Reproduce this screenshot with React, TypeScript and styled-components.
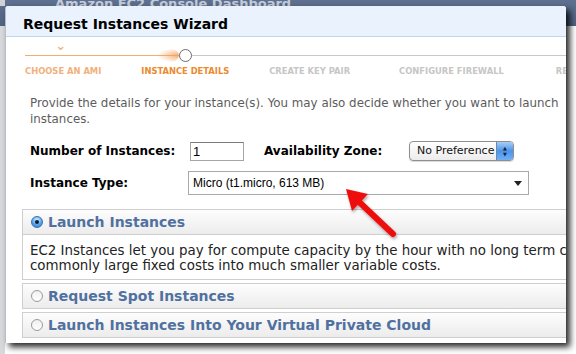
import { FC } from 'react';
import styled, { createGlobalStyle } from 'styled-components';

const GlobalStyle = createGlobalStyle`
  html, body {
    margin: 0;
    padding: 0;
    background: #ffffff;
  }
  body {
    font-family: 'DejaVu Sans', Verdana, sans-serif;
  }
`;

interface Step {
  label: string;
  state: 'done' | 'current' | 'todo';
  shift?: number;
}

const steps: Step[] = [
  { label: 'CHOOSE AN AMI', state: 'done' },
  { label: 'INSTANCE DETAILS', state: 'current' },
  { label: 'CREATE KEY PAIR', state: 'todo' },
  { label: 'CONFIGURE FIREWALL', state: 'todo', shift: 9 },
  { label: 'REVIEW', state: 'todo', shift: 12 },
];

interface Option {
  title: string;
  selected?: boolean;
  body?: string[];
}

const options: Option[] = [
  {
    title: 'Launch Instances',
    selected: true,
    body: [
      'EC2 Instances let you pay for compute capacity by the hour with no long term commitments.',
      'commonly large fixed costs into much smaller variable costs.',
    ],
  },
  { title: 'Request Spot Instances' },
  { title: 'Launch Instances Into Your Virtual Private Cloud' },
];

const Radio: FC<{ checked?: boolean }> = ({ checked }) => (
  <RadioMark checked={checked} />
);

const RedArrow: FC = () => (
  <ArrowSvg width="70" height="60" viewBox="0 0 70 60">
    <defs>
      <filter id="sh" x="-20%" y="-20%" width="140%" height="140%">
        <feDropShadow dx="1" dy="2" stdDeviation="1.5" floodColor="#000" floodOpacity="0.35" />
      </filter>
    </defs>
    <g filter="url(#sh)">
      <line x1="56" y1="52" x2="19" y2="17" stroke="#ee1111" strokeWidth="6" strokeLinecap="round" />
      <polygon points="9,7 31,12 15,29" fill="#ee1111" />
    </g>
  </ArrowSvg>
);

const App: FC = () => (
  <Desktop>
    <GlobalStyle />
    <BackTitleBar>
      <BackCorner />
      <BackTitle>Amazon EC2 Console Dashboard</BackTitle>
    </BackTitleBar>
    <BackPage />

    <Dialog>
      <Header>
        <Title>Request Instances Wizard</Title>
      </Header>

      <Steps>
        {steps.map((s) => (
          <StepItem key={s.label} shift={s.shift ?? 0}>
            <Marker>
              {s.state === 'done' && <Check>&#8964;</Check>}
              {s.state === 'current' && <CurrentDot />}
            </Marker>
            <StepLabel state={s.state}>{s.label}</StepLabel>
          </StepItem>
        ))}
      </Steps>

      <Content>
        <Intro>
          Provide the details for your instance(s). You may also decide whether you want to launch
          <br />
          instances.
        </Intro>

        <FormRow>
          <FieldLabel width={160}>Number of Instances:</FieldLabel>
          <NumberInput>1</NumberInput>
          <FieldLabel width={146}>Availability Zone:</FieldLabel>
          <MacSelect>
            <MacSelectText>No Preference</MacSelectText>
            <MacStepper>
              <span>&#9650;</span>
              <span>&#9660;</span>
            </MacStepper>
          </MacSelect>
        </FormRow>

        <FormRow>
          <FieldLabel width={159}>Instance Type:</FieldLabel>
          <TypeSelect>
            <span>Micro (t1.micro, 613 MB)</span>
            <DropTriangle />
          </TypeSelect>
        </FormRow>

        <Panels>
          {options.map((o) => (
            <Panel key={o.title}>
              <PanelHeader>
                <Radio checked={o.selected} />
                <PanelTitle>{o.title}</PanelTitle>
              </PanelHeader>
              {o.body && (
                <PanelBody>
                  {o.body.map((line) => (
                    <div key={line}>{line}</div>
                  ))}
                </PanelBody>
              )}
            </Panel>
          ))}
        </Panels>
      </Content>

      <RedArrow />
    </Dialog>
  </Desktop>
);

const Desktop = styled.div`
  position: relative;
  width: 576px;
  height: 354px;
  overflow: hidden;
  background: #ffffff;
`;

const BackTitleBar = styled.div`
  display: flex;
  align-items: flex-start;
  height: 26px;
  overflow: hidden;
  background: linear-gradient(#5f7190, #4f6282);
`;

const BackCorner = styled.div`
  width: 5px;
  height: 6px;
  background: #cfd3d8;
  margin-right: 50px;
`;

const BackTitle = styled.div`
  font-family: 'DejaVu Sans', sans-serif;
  font-weight: bold;
  font-size: 13px;
  line-height: 14px;
  color: #c3ccda;
  margin-top: -3px;
  white-space: nowrap;
`;

const BackPage = styled.div`
  height: 328px;
  background: linear-gradient(to right, #d6d8db 0 5px, #ffffff 5px);
`;

const Dialog = styled.div`
  position: absolute;
  left: 5px;
  top: 6px;
  width: 561px;
  height: 337px;
  background: #ffffff;
  border-left: 1px solid #b8bec6;
  box-sizing: border-box;
  overflow: hidden;
  box-shadow: 4px 4px 6px rgba(0, 0, 0, 0.85);
  border-radius: 3px 3px 0 0;
`;

const Header = styled.div`
  height: 31px;
  background: #eaf2fd;
  border-bottom: 1px solid #bcd8ef;
  display: flex;
  align-items: center;
  padding: 5px 0 0 17px;
  box-sizing: border-box;
`;

const Title = styled.h1`
  margin: 0;
  font-family: 'DejaVu Sans', sans-serif;
  font-size: 14px;
  font-weight: bold;
  color: #000000;
`;

const Steps = styled.div`
  display: flex;
  gap: 40px;
  padding: 8px 0 0 19px;
  white-space: nowrap;
  background:
    linear-gradient(#f2ae6a, #f2ae6a) no-repeat 19px 18px / 160px 1px,
    linear-gradient(#c9c9c9, #c9c9c9) no-repeat 19px 18px / 100% 1px;
`;

const StepItem = styled.div<{ shift: number }>`
  display: flex;
  flex-direction: column;
  align-items: center;
  flex-shrink: 0;
  margin-left: ${({ shift }) => shift}px;
`;

const Marker = styled.div`
  position: relative;
  height: 20px;
  width: 100%;
  display: flex;
  justify-content: center;
  align-items: center;
`;

const Check = styled.span`
  align-self: flex-start;
  margin-top: -7px;
  margin-right: 5px;
  font-size: 13px;
  font-weight: bold;
  color: #f3b47a;
`;

const CurrentDot = styled.div`
  position: relative;
  width: 11px;
  height: 11px;
  border-radius: 50%;
  border: 1.5px solid #6d6d6d;
  background: #ffffff;

  &::before {
    content: '';
    position: absolute;
    right: 12px;
    top: -2px;
    width: 22px;
    height: 15px;
    border-radius: 50%;
    background: radial-gradient(ellipse at 100% 50%, rgba(243, 160, 90, 0.85), rgba(243, 160, 90, 0) 70%);
  }
`;

const StepLabel = styled.div<{ state: Step['state'] }>`
  font-family: 'DejaVu Sans Condensed', 'DejaVu Sans', sans-serif;
  font-stretch: condensed;
  font-weight: bold;
  font-size: 9.3px;
  line-height: 12px;
  color: ${({ state }) =>
    state === 'done' ? '#f1b07b' : state === 'current' ? '#eb8a30' : '#c6c6c6'};
`;

const Content = styled.div`
  padding: 18px 0 0 24px;
`;

const Intro = styled.p`
  margin: 0 0 14px;
  font-size: 11.85px;
  line-height: 16px;
  color: #5c5c5c;
  white-space: nowrap;
`;

const FormRow = styled.div`
  display: flex;
  align-items: center;
  margin-bottom: 10px;
  white-space: nowrap;
`;

const FieldLabel = styled.div<{ width: number }>`
  width: ${({ width }) => width}px;
  flex-shrink: 0;
  font-size: 12px;
  font-weight: bold;
  color: #000000;
`;

const NumberInput = styled.div`
  width: 48px;
  height: 16px;
  margin-right: 20px;
  border: 1px solid #a5a5a5;
  border-top-color: #7b7b7b;
  padding: 1px 2px 0;
  font-family: 'Liberation Sans', Arial, sans-serif;
  font-size: 13px;
  line-height: 16px;
  color: #000000;
`;

const MacSelect = styled.div`
  display: flex;
  align-items: stretch;
  width: 103px;
  height: 18px;
  margin-left: -1px;
  border: 1px solid #8e8e8e;
  border-radius: 4px;
  overflow: hidden;
  background: linear-gradient(#ffffff, #ececec);
  box-shadow: 0 1px 1px rgba(0, 0, 0, 0.15);
`;

const MacSelectText = styled.div`
  flex: 1;
  padding-left: 7px;
  font-family: 'DejaVu Sans', sans-serif;
  font-size: 11px;
  line-height: 18px;
  color: #111111;
`;

const MacStepper = styled.div`
  width: 16px;
  display: flex;
  flex-direction: column;
  align-items: center;
  justify-content: center;
  background: linear-gradient(#a9cdf6, #4b94e8 50%, #6fb0f5);
  border-left: 1px solid #6c88ad;
  font-size: 5px;
  line-height: 6px;
  color: #102040;
`;

const TypeSelect = styled.div`
  display: flex;
  align-items: center;
  justify-content: space-between;
  width: 329px;
  height: 22px;
  padding: 0 6px 0 4px;
  margin-left: -1px;
  border: 1px solid #a9a9a9;
  background: #ffffff;
  font-family: 'Liberation Sans', Arial, sans-serif;
  font-size: 12px;
  color: #000000;
`;

const DropTriangle = styled.span`
  width: 0;
  height: 0;
  border-left: 4px solid transparent;
  border-right: 4px solid transparent;
  border-top: 5px solid #222222;
`;

const Panels = styled.div`
  display: flex;
  flex-direction: column;
  gap: 3px;
  margin: 14px 0 0 -8px;
  width: 600px;
`;

const Panel = styled.div`
  border: 1px solid #cfcfcf;
  background: #ffffff;
`;

const PanelHeader = styled.div`
  display: flex;
  align-items: center;
  gap: 5px;
  height: 24px;
  padding-left: 8px;
  background: linear-gradient(#fdfdfd, #ececec);
`;

const PanelTitle = styled.span`
  font-size: 14px;
  font-weight: bold;
  color: #50719f;
  white-space: nowrap;
`;

const RadioMark = styled.span<{ checked?: boolean }>`
  position: relative;
  width: 12px;
  height: 12px;
  border-radius: 50%;
  box-sizing: border-box;
  border: 1px solid ${({ checked }) => (checked ? '#3a6fb0' : '#9a9a9a')};
  background: ${({ checked }) =>
    checked
      ? 'radial-gradient(circle at 50% 30%, #d6ecff, #5aa3ee 55%, #2f76c9)'
      : 'linear-gradient(#f0f0f0, #ffffff)'};

  &::after {
    content: '';
    display: ${({ checked }) => (checked ? 'block' : 'none')};
    position: absolute;
    left: 50%;
    top: 50%;
    width: 4px;
    height: 4px;
    margin: -2px 0 0 -2px;
    border-radius: 50%;
    background: #0b1f3a;
  }
`;

const PanelBody = styled.div`
  border-top: 1px solid #cfcfcf;
  padding: 8px 0 6px 7px;
  font-size: 13.4px;
  line-height: 15px;
  color: #222222;
  white-space: nowrap;
`;

const ArrowSvg = styled.svg`
  position: absolute;
  left: 331px;
  top: 176px;
`;

export default App;
